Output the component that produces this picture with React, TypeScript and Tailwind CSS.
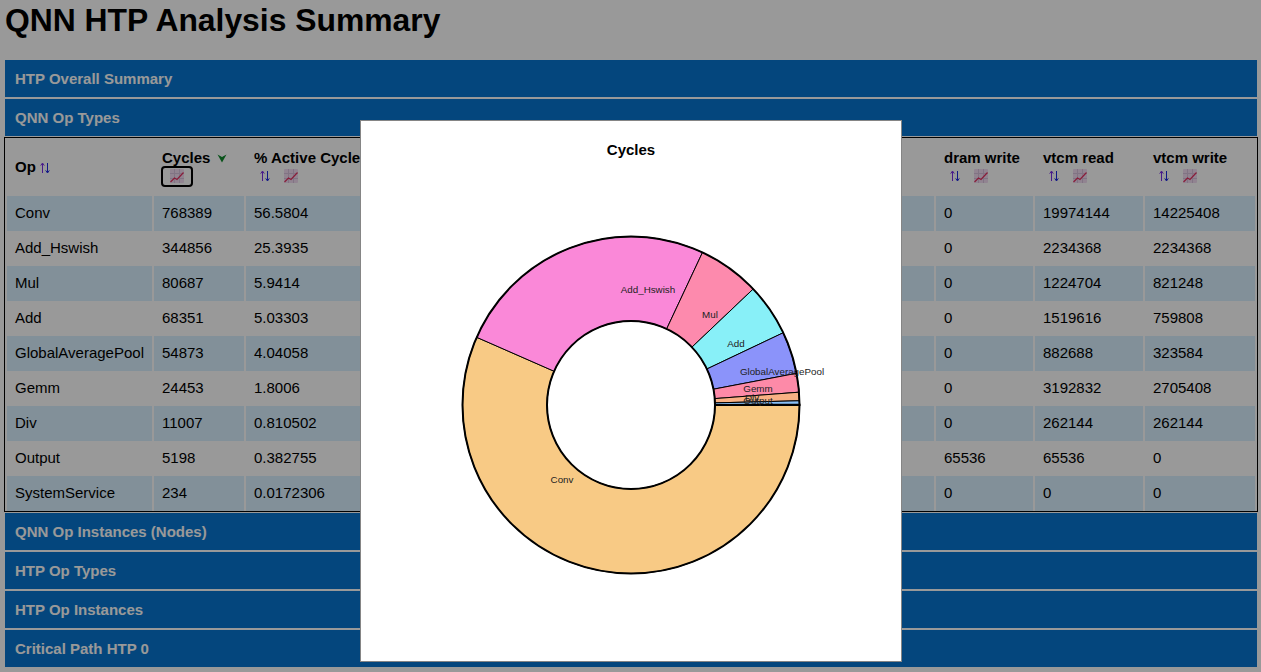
import React from 'react';

const font = "font-['Liberation_Sans',Arial,sans-serif]";

const rows = [
  ['Conv', '768389', '56.5804', '0', '19974144', '14225408'],
  ['Add_Hswish', '344856', '25.3935', '0', '2234368', '2234368'],
  ['Mul', '80687', '5.9414', '0', '1224704', '821248'],
  ['Add', '68351', '5.03303', '0', '1519616', '759808'],
  ['GlobalAveragePool', '54873', '4.04058', '0', '882688', '323584'],
  ['Gemm', '24453', '1.8006', '0', '3192832', '2705408'],
  ['Div', '11007', '0.810502', '0', '262144', '262144'],
  ['Output', '5198', '0.382755', '65536', '65536', '0'],
  ['SystemService', '234', '0.0172306', '0', '0', '0'],
];

const slices = [
  { value: 768389, color: '#f8ca85' },
  { value: 344856, color: '#fa88d8' },
  { value: 80687, color: '#fd8aad' },
  { value: 68351, color: '#88f0f8' },
  { value: 54873, color: '#8b93fa' },
  { value: 24453, color: '#fd8aa8' },
  { value: 11007, color: '#f9b184' },
  { value: 5198, color: '#88c0f8' },
  { value: 234, color: '#8b93fa' },
];

const labels: [string, number, number][] = [
  ['Conv', 562, 483],
  ['Add_Hswish', 648, 293],
  ['Mul', 710, 318],
  ['Add', 736, 347],
  ['GlobalAveragePool', 782, 375],
  ['Gemm', 758, 392],
  ['Div', 752, 401],
  ['Output', 758, 404],
];

function SortIcon() {
  return (
    <svg width="10" height="12" viewBox="0 0 10 12" className="inline-block">
      <path d="M2.5 11V1.5M0.7 3.6L2.5 1l1.8 2.6" fill="none" stroke="#7a2ee6" strokeWidth="1" />
      <path d="M7.5 1v9.5M5.7 8.4l1.8 2.6 1.8-2.6" fill="none" stroke="#1c28e0" strokeWidth="1" />
    </svg>
  );
}

function ChartIcon() {
  return (
    <svg width="14" height="14" viewBox="0 0 14 14" className="inline-block">
      <rect width="14" height="14" rx="1" fill="#f2dcf2" />
      <path d="M0 4.5h14M0 9.5h14M4.5 0v14M9.5 0v14" stroke="#d8c2dc" strokeWidth="1" />
      <path d="M0.5 13l4-4 2.5 1.5 6.5-7" fill="none" stroke="#e4305f" strokeWidth="1.2" />
    </svg>
  );
}

function ActiveArrow() {
  return (
    <svg width="10" height="9" viewBox="0 0 10 9" className="ml-[7px] inline-block">
      <path d="M0.5 0.5L5 3l4.5-2.5L5 8.5z" fill="#0f8a2c" />
    </svg>
  );
}

function Bar({ title }: { title: string }) {
  return (
    <div className="flex h-[37px] items-center bg-[#0776d0] pl-[10px] pt-px text-[15px] font-bold text-white">
      {title}
    </div>
  );
}

function Head({ title, width, active }: { title: string; width: string; active?: boolean }) {
  return (
    <th className={`${width} px-[8px] text-left align-middle text-[15px] font-bold leading-[18px] text-black`}>
      <div className="-mb-px whitespace-nowrap pt-px">
        {title}
        {active && <ActiveArrow />}
      </div>
      {active ? (
        <div className="-ml-[1px] flex h-[21px] w-[32px] items-center justify-center rounded-[4px] border-2 border-black">
          <ChartIcon />
        </div>
      ) : (
        <div className="flex h-[21px] items-center gap-[14px] pl-[6px]">
          <SortIcon />
          <ChartIcon />
        </div>
      )}
    </th>
  );
}

function Donut() {
  const total = slices.reduce((s, x) => s + x.value, 0);
  const cx = 270;
  const cy = 284;
  const R = 168.5;
  const r = 84;
  let acc = 0;
  const paths = slices.map((s) => {
    const a0 = (acc / total) * 2 * Math.PI;
    acc += s.value;
    const a1 = (acc / total) * 2 * Math.PI;
    const large = a1 - a0 > Math.PI ? 1 : 0;
    const d = [
      `M${cx + R * Math.cos(a0)} ${cy + R * Math.sin(a0)}`,
      `A${R} ${R} 0 ${large} 1 ${cx + R * Math.cos(a1)} ${cy + R * Math.sin(a1)}`,
      `L${cx + r * Math.cos(a1)} ${cy + r * Math.sin(a1)}`,
      `A${r} ${r} 0 ${large} 0 ${cx + r * Math.cos(a0)} ${cy + r * Math.sin(a0)}`,
      'Z',
    ].join(' ');
    return { d, color: s.color };
  });
  return (
    <svg width="540" height="540" viewBox="0 0 540 540" className="block">
      <text x="270" y="34" textAnchor="middle" fontSize="15" fontWeight="700" fontFamily="Liberation Sans, Arial, sans-serif" fill="#000">
        Cycles
      </text>
      {paths.map((p, i) => (
        <path key={i} d={p.d} fill={p.color} stroke="#000" strokeWidth={i === 8 ? 2 : 1} />
      ))}
      <circle cx={cx} cy={cy} r={R} fill="none" stroke="#000" strokeWidth="2" />
      <circle cx={cx} cy={cy} r={r} fill="none" stroke="#000" strokeWidth="2" />
      {labels.map(([t, x, y]) => (
        <text key={t} x={x - 361} y={y - 121} textAnchor="middle" fontSize="9.8" fontFamily="Liberation Sans, Arial, sans-serif" fill="#222">
          {t}
        </text>
      ))}
    </svg>
  );
}

export default function App() {
  return (
    <div className={`${font} relative h-[672px] w-[1261px] overflow-hidden bg-white`}>
      <h1 className="m-0 pl-[5px] text-[31.85px] font-bold leading-[40px] text-black">QNN HTP Analysis Summary</h1>

      <div className="mt-[20px] ml-[5px] mr-[4px] flex flex-col gap-[2px]">
        <Bar title="HTP Overall Summary" />
        <Bar title="QNN Op Types" />
      </div>

      <div className="mx-[3px] mt-px ml-[4px] border border-black">
        <table className="w-full table-fixed border-separate border-spacing-x-[2px] border-spacing-y-0 text-[15px] text-black">
          <thead>
            <tr className="h-[58px]">
              <th className="w-[145px] px-[8px] text-left text-[15px] font-bold">
                Op <SortIcon />
              </th>
              <Head title="Cycles" width="w-[90px]" active />
              <Head title="% Active Cycles" width="w-[688px]" />
              <Head title="dram write" width="w-[97px]" />
              <Head title="vtcm read" width="w-[108px]" />
              <Head title="vtcm write" width="w-[110px]" />
            </tr>
          </thead>
          <tbody>
            {rows.map((row, i) => (
              <tr key={row[0]} className="h-[35px]">
                {row.map((cell, j) => (
                  <td key={j} className={`whitespace-nowrap px-[8px] ${i % 2 === 0 ? 'bg-[#d9f0ff]' : ''}`}>
                    {cell}
                  </td>
                ))}
              </tr>
            ))}
          </tbody>
        </table>
      </div>

      <div className="mt-px ml-[5px] mr-[4px] flex flex-col gap-[2px]">
        <Bar title="QNN Op Instances (Nodes)" />
        <Bar title="HTP Op Types" />
        <Bar title="HTP Op Instances" />
        <Bar title="Critical Path HTP 0" />
      </div>

      <div className="absolute inset-0 bg-black/40" />

      <div className="absolute left-[360px] top-[120px] h-[542px] w-[542px] border border-[#858585] bg-white">
        <Donut />
      </div>
    </div>
  );
}
